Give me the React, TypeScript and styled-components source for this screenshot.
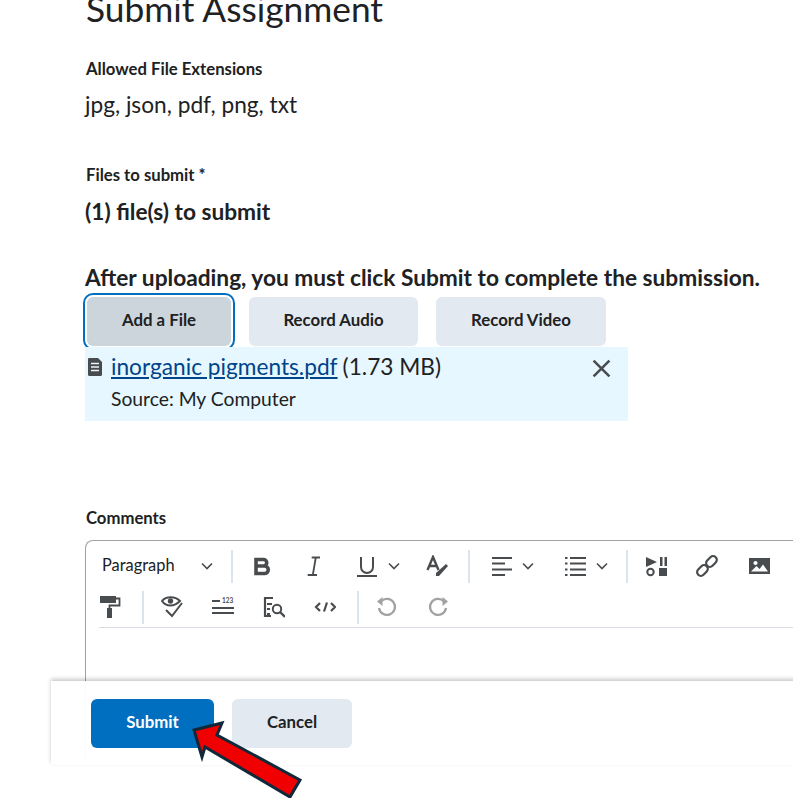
import styled, { createGlobalStyle } from "styled-components";
import { ReactNode } from "react";

const Global = createGlobalStyle`
  html, body {
    margin: 0;
    padding: 0;
    background: #fff;
  }
  body {
    font-family: "Lato", "Liberation Sans", sans-serif;
    color: #202122;
    overflow: hidden;
  }
`;

const Page = styled.div`
  position: relative;
  width: 793px;
  height: 798px;
  overflow: hidden;
  padding-left: 85px;
  box-sizing: border-box;
`;

const Title = styled.h1`
  margin: -13px 0 0 1px;
  font-size: 35.3px;
  line-height: 44px;
  font-weight: 400;
`;

const Label = styled.div<{ $top: number }>`
  margin: ${(p) => p.$top}px 0 0 1px;
  font-size: 16.7px;
  line-height: 20px;
  font-weight: 700;
`;

const Body = styled.div`
  margin-top: 12px;
  font-size: 22.7px;
  line-height: 28px;
`;

const Strong = styled.div<{ $top: number }>`
  margin-top: ${(p) => p.$top}px;
  font-size: 22.7px;
  line-height: 28px;
  font-weight: 700;
  white-space: nowrap;
`;

const Actions = styled.div`
  display: flex;
  gap: 18px;
  margin: 5px 0 0 2px;
`;

const Button = styled.button<{ $w: number; $focus?: boolean }>`
  width: ${(p) => p.$w}px;
  height: 49px;
  padding: 0 0 4px;
  border: 0;
  border-radius: 6px;
  background: ${(p) => (p.$focus ? "#cdd5dc" : "#e3e9f1")};
  color: #202122;
  font: 700 16.8px "Lato", sans-serif;
  outline: ${(p) => (p.$focus ? "2.500px solid #006fbf" : "none")};
  outline-offset: 2px;
`;

const FileCard = styled.div`
  position: relative;
  width: 543px;
  height: 74px;
  margin-top: 1px;
  background: #e6f7ff;
`;

const FileRow = styled.div`
  display: flex;
  align-items: center;
  height: 38px;
  font-size: 22.7px;
`;

const FileIcon = styled.svg`
  width: 16px;
  height: 18px;
  margin: 2px 8px 0 2px;
`;

const FileLink = styled.a`
  color: #004489;
  text-decoration: underline;
`;

const Size = styled.span`
  margin-left: 5px;
`;

const Source = styled.div`
  padding-left: 26px;
  font-size: 19.3px;
  line-height: 24px;
  margin-top: 2px;
`;

const Close = styled.svg`
  position: absolute;
  top: 12px;
  right: 17px;
  width: 19px;
  height: 19px;
`;

const Editor = styled.div`
  width: 760px;
  height: 224px;
  margin-top: 12px;
  border: 1px solid #9ea2a5;
  border-right: 0;
  border-bottom: 0;
  border-radius: 8px 0 0 0;
  box-sizing: border-box;
  padding-top: 7px;
`;

const ToolRow = styled.div<{ $top?: number }>`
  display: flex;
  align-items: center;
  height: 36px;
  margin-top: ${(p) => p.$top ?? 0}px;
`;

const Divider = styled.span`
  width: 2px;
  height: 33px;
  background: #dde3ea;
  flex: none;
`;

const Select = styled.div`
  width: 145px;
  display: flex;
  align-items: center;
  box-sizing: border-box;
  padding-left: 16px;
  font-size: 16.4px;
  line-height: 20px;
  flex: none;
`;

const SelectText = styled.span`
  margin-top: -3px;
`;

const SelectChevron = styled.span`
  display: flex;
  margin-left: auto;
  margin-right: 18px;
`;

const Tool = styled.span<{ $w: number; $pl: number }>`
  display: flex;
  align-items: center;
  gap: 10px;
  flex: none;
  box-sizing: border-box;
  width: ${(p) => p.$w}px;
  padding-left: ${(p) => p.$pl}px;
`;

const ToolLine = styled.div`
  height: 1px;
  margin: 2px 0 0 13px;
  background: #d9dee5;
`;

const Footer = styled.div`
  position: absolute;
  left: 51px;
  top: 681px;
  width: 760px;
  height: 84px;
  display: flex;
  align-items: center;
  gap: 18px;
  padding-left: 40px;
  box-sizing: border-box;
  background: rgba(255, 255, 255, 0.96);
  box-shadow: 0 -2px 4px rgba(0, 0, 0, 0.22);
`;

const Primary = styled(Button)`
  background: #006fbf;
  color: #fff;
`;

const Arrow = styled.svg`
  position: absolute;
  left: 0;
  top: 0;
  width: 793px;
  height: 798px;
  pointer-events: none;
`;

function Ico({ children, muted }: { children: ReactNode; muted?: boolean }) {
  return (
    <svg width="22" height="22" viewBox="0 0 22 22" fill="none" stroke={muted ? "#a0a2a4" : "#494c4e"} strokeWidth="2" style={{ flex: "none" }}>
      {children}
    </svg>
  );
}

function Chevron() {
  return (
    <svg width="12" height="8" viewBox="0 0 12 8" fill="none" stroke="#494c4e" strokeWidth="1.6" style={{ flex: "none" }}>
      <path d="M1 1.500l5 5 5-5" />
    </svg>
  );
}

export default function App() {
  return (
    <Page>
      <Global />
      <Title>Submit Assignment</Title>
      <Label $top={28}>Allowed File Extensions</Label>
      <Body>jpg, json, pdf, png, txt</Body>
      <Label $top={46}>Files to submit *</Label>
      <Strong $top={13}>(1) file(s) to submit</Strong>
      <Strong $top={38}>After uploading, you must click Submit to complete the submission.</Strong>
      <Actions>
        <Button $w={144} $focus>Add a File</Button>
        <Button $w={169}>Record Audio</Button>
        <Button $w={170}>Record Video</Button>
      </Actions>
      <FileCard>
        <FileRow>
          <FileIcon viewBox="0 0 16 18">
            <path fill="#494c4e" d="M2 0h9l4 4v12.500a1.500 1.500 0 0 1-1.500 1.500h-11A1.500 1.500 0 0 1 1 16.500V1a1 1 0 0 1 1-1z" />
            <path stroke="#e6f7ff" strokeWidth="1.500" d="M4 5.500h8M4 9h8M4 12.500h8" />
          </FileIcon>
          <FileLink href="#">inorganic pigments.pdf</FileLink>
          <Size>(1.73 MB)</Size>
        </FileRow>
        <Source>Source: My Computer</Source>
        <Close viewBox="0 0 18 18" fill="none" stroke="#494c4e" strokeWidth="2.400">
          <path d="M1.500 1.500l15 15M16.500 1.500l-15 15" />
        </Close>
      </FileCard>
      <Label $top={87}>Comments</Label>
      <Editor>
        <ToolRow>
          <Select>
            <SelectText>Paragraph</SelectText>
            <SelectChevron><Chevron /></SelectChevron>
          </Select>
          <Divider />
          <Tool $w={54} $pl={18}>
            <Ico><path strokeWidth="3.600" d="M5 4.500h7.500a3.200 3.200 0 0 1 0 6.500H5zM5 11h8.500a3.600 3.600 0 0 1 0 7.500H5z" /></Ico>
          </Tool>
          <Tool $w={50} $pl={14}>
            <Ico><path strokeWidth="1.800" d="M10.700 2.500H19M6.700 20H16M14.800 2.500L11.800 20" /></Ico>
          </Tool>
          <Tool $w={73} $pl={19}>
            <Ico><path strokeWidth="2" d="M5 2v10a6 6 0 0 0 12 0V2M1 21h20" /></Ico>
            <Chevron />
          </Tool>
          <Tool $w={58} $pl={16}>
            <Ico>
              <path strokeWidth="2.400" d="M1.500 15L7 2l5.500 13M3.500 11h7" />
              <path fill="#494c4e" stroke="none" d="M20 9l2 2-9 10h-3v-3z" />
            </Ico>
          </Tool>
          <Divider />
          <Tool $w={70} $pl={20}>
            <Ico><path strokeWidth="1.800" d="M2 3h20M2 8.500h13M2 14.500h20M2 20h13" /></Ico>
            <Chevron />
          </Tool>
          <Tool $w={86} $pl={24}>
            <Ico><path strokeWidth="1.800" d="M6 3h16M6 8.500h16M6 14.500h16M6 20h16M1 3h2.500M1 8.500h2.500M1 14.500h2.500M1 20h2.500" /></Ico>
            <Chevron />
          </Tool>
          <Divider />
          <Tool $w={54} $pl={17}>
            <Ico>
              <path fill="#494c4e" stroke="none" d="M1 2l11 5-11 5zM15 2h2.500v9H15zM19.500 2H22v9h-2.500zM14 13h8v8h-8z" />
              <circle cx="5.500" cy="17" r="3.200" />
            </Ico>
          </Tool>
          <Tool $w={50} $pl={14}>
            <Ico>
              <rect x="0.500" y="11.700" width="12" height="7.500" rx="3.700" transform="rotate(-45 6.500 15.500)" strokeWidth="2.200" />
              <rect x="9.500" y="2.700" width="12" height="7.500" rx="3.700" transform="rotate(-45 15.500 6.500)" strokeWidth="2.200" />
            </Ico>
          </Tool>
          <Tool $w={50} $pl={16}>
            <Ico>
              <path fill="#494c4e" stroke="none" fillRule="evenodd" d="M1 3h21v16H1zM3 16.500h17l-5-7-3.500 4.500-3-3zM7.500 6a2 2 0 1 0 .01 0z" />
            </Ico>
          </Tool>
        </ToolRow>
        <ToolRow $top={5}>
          <Tool $w={56} $pl={13}>
            <Ico>
              <path fill="#494c4e" stroke="none" d="M1 0h16v7H1zM8 12h5v10H8z" />
              <path strokeWidth="1.800" d="M17 2.500h3.500v7H10.500V13" />
            </Ico>
          </Tool>
          <Divider />
          <Tool $w={54} $pl={17}>
            <Ico>
              <path strokeWidth="2" d="M1 5C5 0 14 0 19 5c-3 3-6 4.500-9.500 4.500S3 8 1 5zM5 14l6 6L21 7" />
              <circle cx="9.500" cy="5" r="2.700" fill="#494c4e" stroke="none" />
            </Ico>
          </Tool>
          <Tool $w={50} $pl={14}>
            <Ico>
              <path strokeWidth="2" d="M0 5h8M0 12h22M0 17h22" />
              <text x="10" y="6.500" fontSize="6.500" fontWeight="700" fontFamily="Lato, sans-serif" fill="#494c4e" stroke="none">123</text>
            </Ico>
          </Tool>
          <Tool $w={50} $pl={15}>
            <Ico>
              <path strokeWidth="2.200" d="M10 2H2v18h6M4 8h5M4 13h3M4 18h3" />
              <circle cx="14" cy="13" r="4.200" />
              <path d="M17 16l5 5" strokeWidth="2.400" />
            </Ico>
          </Tool>
          <Tool $w={59} $pl={16}>
            <Ico><path strokeWidth="2.200" d="M6 7l-4 4 4 4M17 7l4 4-4 4M13 6.500L10 15.500" /></Ico>
          </Tool>
          <Divider />
          <Tool $w={50} $pl={17}>
            <Ico muted>
              <path strokeWidth="2.300" d="M5 5.500A8 8 0 1 1 3 12" />
              <path fill="#a0a2a4" stroke="none" d="M1 5.500L6.500 1v9z" />
            </Ico>
          </Tool>
          <Tool $w={50} $pl={18}>
            <Ico muted>
              <path strokeWidth="2.300" d="M17 5.500A8 8 0 1 0 19 12" />
              <path fill="#a0a2a4" stroke="none" d="M21 5.500L15.500 1v9z" />
            </Ico>
          </Tool>
        </ToolRow>
        <ToolLine />
      </Editor>
      <Footer>
        <Primary $w={123}>Submit</Primary>
        <Button $w={120}>Cancel</Button>
      </Footer>
      <Arrow viewBox="0 0 793 798">
        <polygon points="194,730 222,723 217,735 300,780 290,797 205,747 202,757" fill="#f00000" stroke="#10293a" strokeWidth="3" />
      </Arrow>
    </Page>
  );
}
